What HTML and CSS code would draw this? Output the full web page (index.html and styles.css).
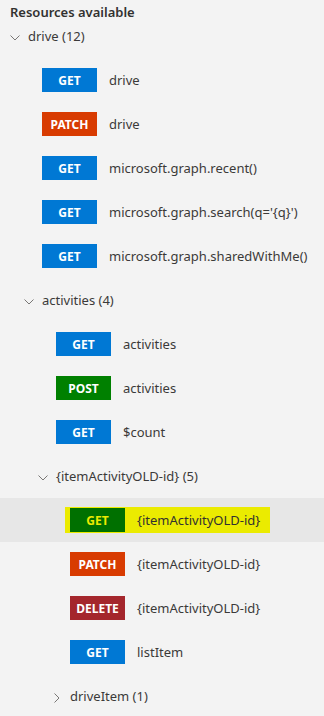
FILE: index.html
```html
<!DOCTYPE html>
<html>

<head>
  <meta charset="utf-8" />
  <title>Resources</title>
  <link rel="stylesheet" href="styles.css">
</head>

<body>
  <div class="panel">
    <div class="title">Resources available</div>
    <ul class="tree">
      <li>
        <div class="row d1"><span class="chev"><svg width="10" height="6" viewBox="0 0 10 6"><polyline points="0.5,0.5 5,5 9.5,0.5" /></svg></span><span class="label">drive (12)</span></div>
        <ul>
          <li class="row leaf d2"><span class="badge get">GET</span><span class="label">drive</span></li>
          <li class="row leaf d2"><span class="badge patch">PATCH</span><span class="label">drive</span></li>
          <li class="row leaf d2"><span class="badge get">GET</span><span class="label">microsoft.graph.recent()</span></li>
          <li class="row leaf d2"><span class="badge get">GET</span><span class="label">microsoft.graph.search(q='{q}')</span></li>
          <li class="row leaf d2"><span class="badge get">GET</span><span class="label">microsoft.graph.sharedWithMe()</span></li>
          <li>
            <div class="row d2"><span class="chev"><svg width="10" height="6" viewBox="0 0 10 6"><polyline points="0.5,0.5 5,5 9.5,0.5" /></svg></span><span class="label">activities (4)</span></div>
            <ul>
              <li class="row leaf d3"><span class="badge get">GET</span><span class="label">activities</span></li>
              <li class="row leaf d3"><span class="badge post">POST</span><span class="label">activities</span></li>
              <li class="row leaf d3"><span class="badge get">GET</span><span class="label">$count</span></li>
              <li>
                <div class="row d3"><span class="chev"><svg width="10" height="6" viewBox="0 0 10 6"><polyline points="0.5,0.5 5,5 9.5,0.5" /></svg></span><span class="label">{itemActivityOLD-id} (5)</span></div>
                <ul>
                  <li class="row leaf d4 selected"><span class="mark"><span class="badge found">GET</span><span class="label">{itemActivityOLD-id}</span></span></li>
                  <li class="row leaf d4"><span class="badge patch">PATCH</span><span class="label">{itemActivityOLD-id}</span></li>
                  <li class="row leaf d4"><span class="badge delete">DELETE</span><span class="label">{itemActivityOLD-id}</span></li>
                  <li class="row leaf d4"><span class="badge get">GET</span><span class="label">listItem</span></li>
                  <li>
                    <div class="row d4"><span class="chev"><svg width="6" height="10" viewBox="0 0 6 10"><polyline points="0.5,0.5 5,5 0.5,9.5" /></svg></span><span class="label">driveItem (1)</span></div>
                  </li>
                </ul>
              </li>
            </ul>
          </li>
        </ul>
      </li>
    </ul>
  </div>
</body>

</html>
```

FILE: styles.css
```css
html {
  width: 100%;
  height: 100%;
}

body {
  margin: 0;
  padding: 0;
  background: #f3f3f3;
  font-family: "Noto Sans", "Open Sans", sans-serif;
  color: #323130;
}

.panel {
  width: 324px;
  height: 716px;
  overflow: hidden;
}

.title {
  padding: 4px 10px 0;
  line-height: 16px;
  font-size: 13px;
  font-weight: 600;
  color: #323130;
}

.tree,
.tree ul {
  list-style: none;
  margin: 0;
  padding: 0;
}

.tree {
  margin-top: -6px;
}

.row {
  display: flex;
  align-items: center;
  height: 44px;
  font-size: 13px;
  box-sizing: border-box;
}

.chev {
  display: flex;
  align-items: center;
  justify-content: center;
  width: 10px;
  margin-right: 8px;
  padding-top: 3px;
}

.chev polyline {
  fill: none;
  stroke: #797775;
  stroke-width: 1;
}

/* indent per depth */
.d1 { padding-left: 10px; }
.d2 { padding-left: 24px; }
.d3 { padding-left: 38px; }
.d4 { padding-left: 52px; }

.leaf.d2 { padding-left: 42px; }
.leaf.d3 { padding-left: 56px; }
.leaf.d4 { padding-left: 70px; }

.label {
  white-space: nowrap;
  color: #3b3a39;
}

.badge {
  display: inline-flex;
  align-items: center;
  justify-content: center;
  width: 55px;
  height: 24px;
  margin-right: 12px;
  flex-shrink: 0;
  color: #fff;
  font-size: 12px;
  font-weight: 700;
}

.get { background: #0078d4; }
.patch { background: #d83b01; }
.post { background: #008000; }
.delete { background: #a4262c; }

.selected {
  background: #e7e7e7;
}

.leaf.d4.selected {
  padding-left: 65px;
}

.mark {
  display: flex;
  align-items: center;
  padding: 1px 10px 1px 5px;
  background: #ebeb00;
}

.found {
  background: #007000;
  color: #ebeb00;
}

.mark .label {
  color: #323130;
}
```
